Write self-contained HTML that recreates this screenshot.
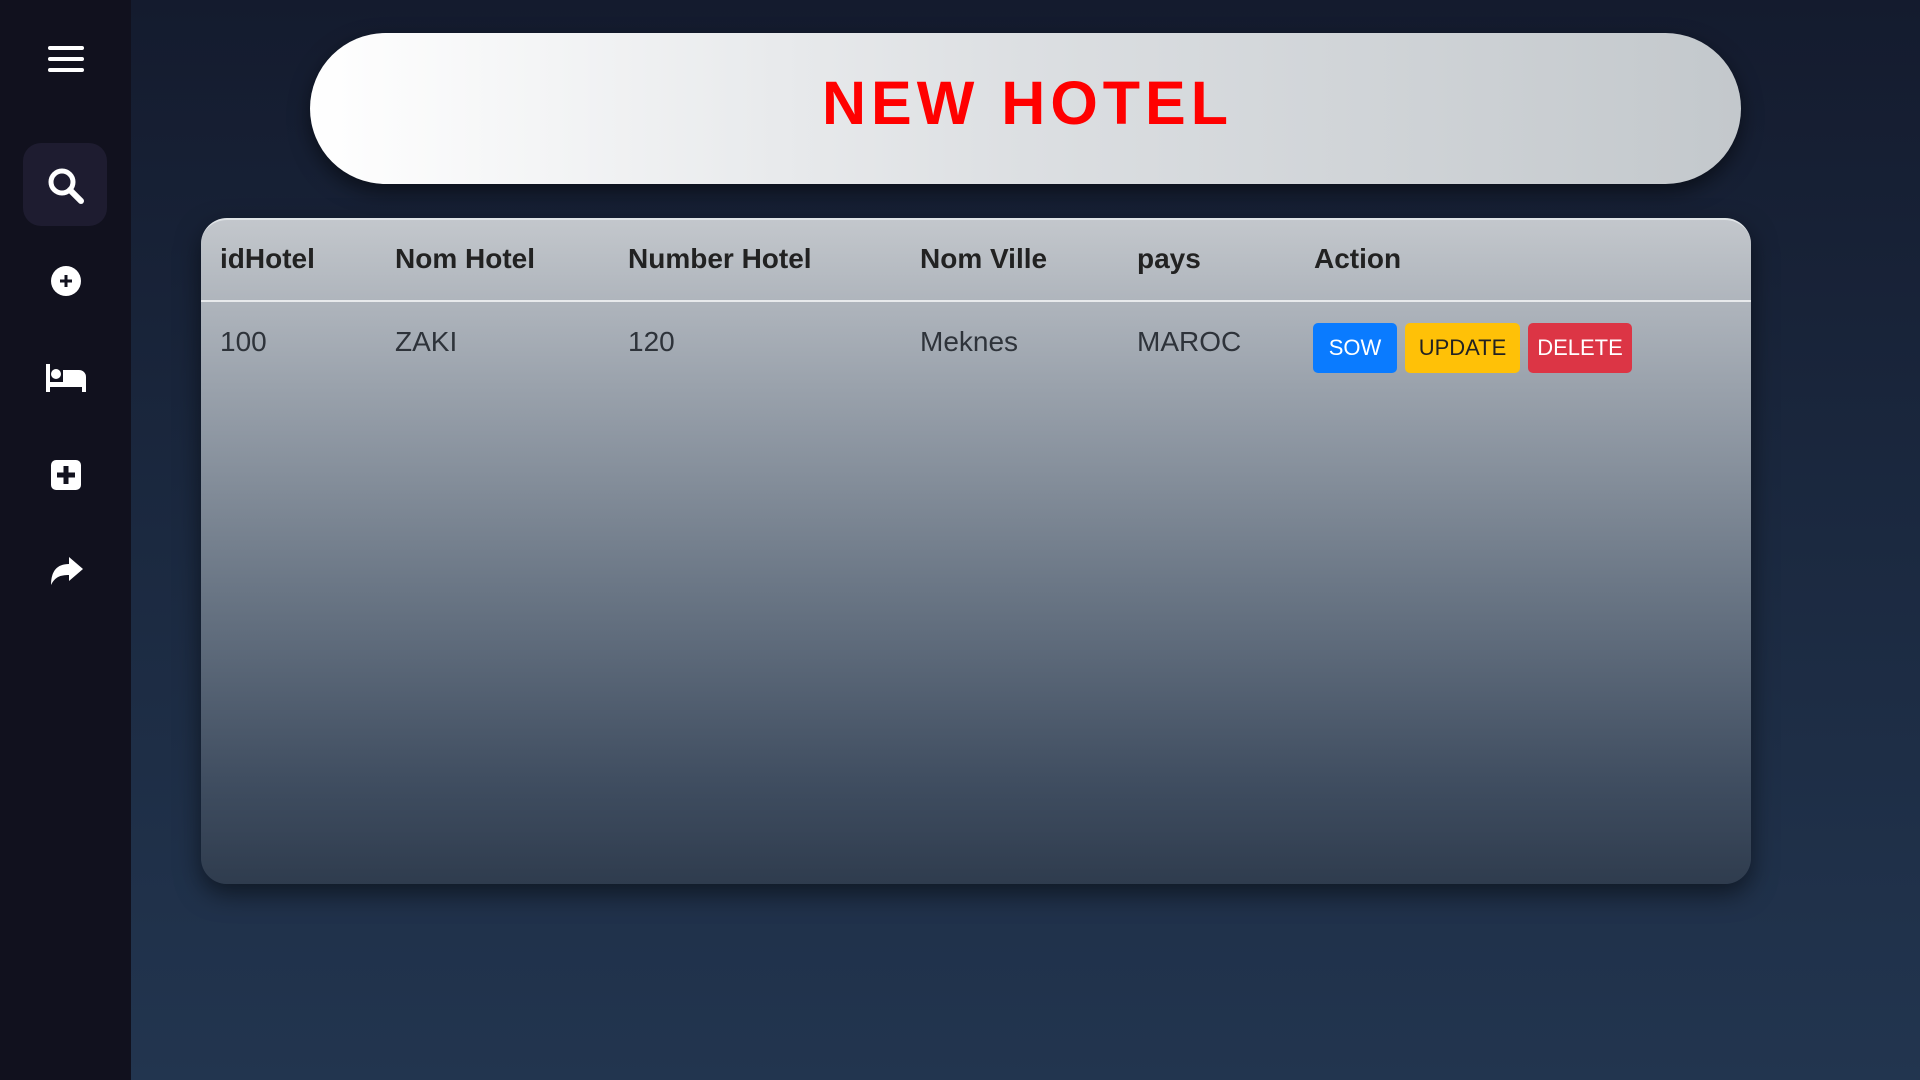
<!DOCTYPE html>
<html><head><meta charset="utf-8"><style>
*{margin:0;padding:0;box-sizing:border-box}
body{width:1920px;height:1080px;overflow:hidden;font-family:"Liberation Sans",sans-serif;background:linear-gradient(180deg,#141b2e 0%,#1b2940 50%,#22354f 100%);position:relative}
.side{position:absolute;left:0;top:0;width:131px;height:1080px;background:#11111e}
.ic{position:absolute;left:0;width:131px;display:flex;justify-content:center;align-items:center}
.sel{position:absolute;left:23px;top:143px;width:84px;height:83px;border-radius:18px;background:#1e1c30}
.head{position:absolute;left:310px;top:33px;width:1431px;height:151px;border-radius:76px;background:linear-gradient(90deg,#ffffff 0%,#dcdfe2 50%,#c3c8cc 100%);box-shadow:0 8px 20px rgba(0,0,0,.5);text-align:center}
.head h1{font-size:61px;color:#ff0000;letter-spacing:5px;font-weight:bold;line-height:151px;margin-top:-5px;padding-left:4px}
.tbl{position:absolute;left:201px;top:218px;width:1550px;height:666px;border-radius:26px;background:linear-gradient(180deg,#c3c7cc 0%,#9aa2ac 25%,#6b7786 55%,#3f4d60 85%,#2f3c4e 100%);border-top:2px solid #dfe3e6;box-shadow:0 10px 25px rgba(0,0,0,.5)}
.line{position:absolute;left:0;right:0;top:80px;height:2px;background:#e8eaec}
.t{position:absolute;font-size:28px;color:#222}
.h{font-weight:bold;top:23px}
.r{top:106px;color:#2e333a}
.b{position:absolute;top:103px;height:50px;border-radius:5px;font-size:22px;line-height:50px;text-align:center}
</style></head><body>
<div class="side">
 <div class="ic" style="top:46px"><svg width="36" height="30"><rect x="0" y="0" width="36" height="4" rx="2" fill="#fff"/><rect x="0" y="11" width="36" height="4" rx="2" fill="#fff"/><rect x="0" y="22" width="36" height="4" rx="2" fill="#fff"/></svg></div>
 <div class="sel"></div>
 <div class="ic" style="top:166px"><svg width="40" height="40"><circle cx="16" cy="16" r="11" stroke="#fff" stroke-width="5" fill="none"/><line x1="24" y1="24" x2="35" y2="35" stroke="#fff" stroke-width="6" stroke-linecap="round"/></svg></div>
 <div class="ic" style="top:265px"><svg width="32" height="32"><circle cx="16" cy="16" r="15" fill="#fff"/><path d="M16 10v12M10 16h12" stroke="#11111e" stroke-width="3"/></svg></div>
 <div class="ic" style="top:362px"><svg width="40" height="32"><rect x="0" y="2" width="4" height="28" fill="#fff"/><rect x="0" y="20" width="40" height="5" fill="#fff"/><circle cx="10" cy="12" r="5" fill="#fff"/><path d="M17 8h16a7 7 0 0 1 7 7v15h-4v-5H17z" fill="#fff"/></svg></div>
 <div class="ic" style="top:460px"><svg width="30" height="30"><rect width="30" height="30" rx="5" fill="#fff"/><path d="M15 6v18M6 15h18" stroke="#11111e" stroke-width="5"/></svg></div>
 <div class="ic" style="top:557px"><svg width="34" height="30"><path d="M34 12 20 0v7C8 7 2 14 2 28 6 20 11 18 20 18v6z" fill="#fff"/></svg></div>
</div>
<div class="head"><h1>NEW HOTEL</h1></div>
<div class="tbl">
 <div class="t h" style="left:19px">idHotel</div>
 <div class="t h" style="left:194px">Nom Hotel</div>
 <div class="t h" style="left:427px">Number Hotel</div>
 <div class="t h" style="left:719px">Nom Ville</div>
 <div class="t h" style="left:936px">pays</div>
 <div class="t h" style="left:1113px">Action</div>
 <div class="line"></div>
 <div class="t r" style="left:19px">100</div>
 <div class="t r" style="left:194px">ZAKI</div>
 <div class="t r" style="left:427px">120</div>
 <div class="t r" style="left:719px">Meknes</div>
 <div class="t r" style="left:936px">MAROC</div>
 <div class="b" style="left:1112px;width:84px;background:#0a7bff;color:#fff">SOW</div>
 <div class="b" style="left:1204px;width:115px;background:#ffc107;color:#222">UPDATE</div>
 <div class="b" style="left:1327px;width:104px;background:#dc3545;color:#fff">DELETE</div>
</div>
</body></html>
